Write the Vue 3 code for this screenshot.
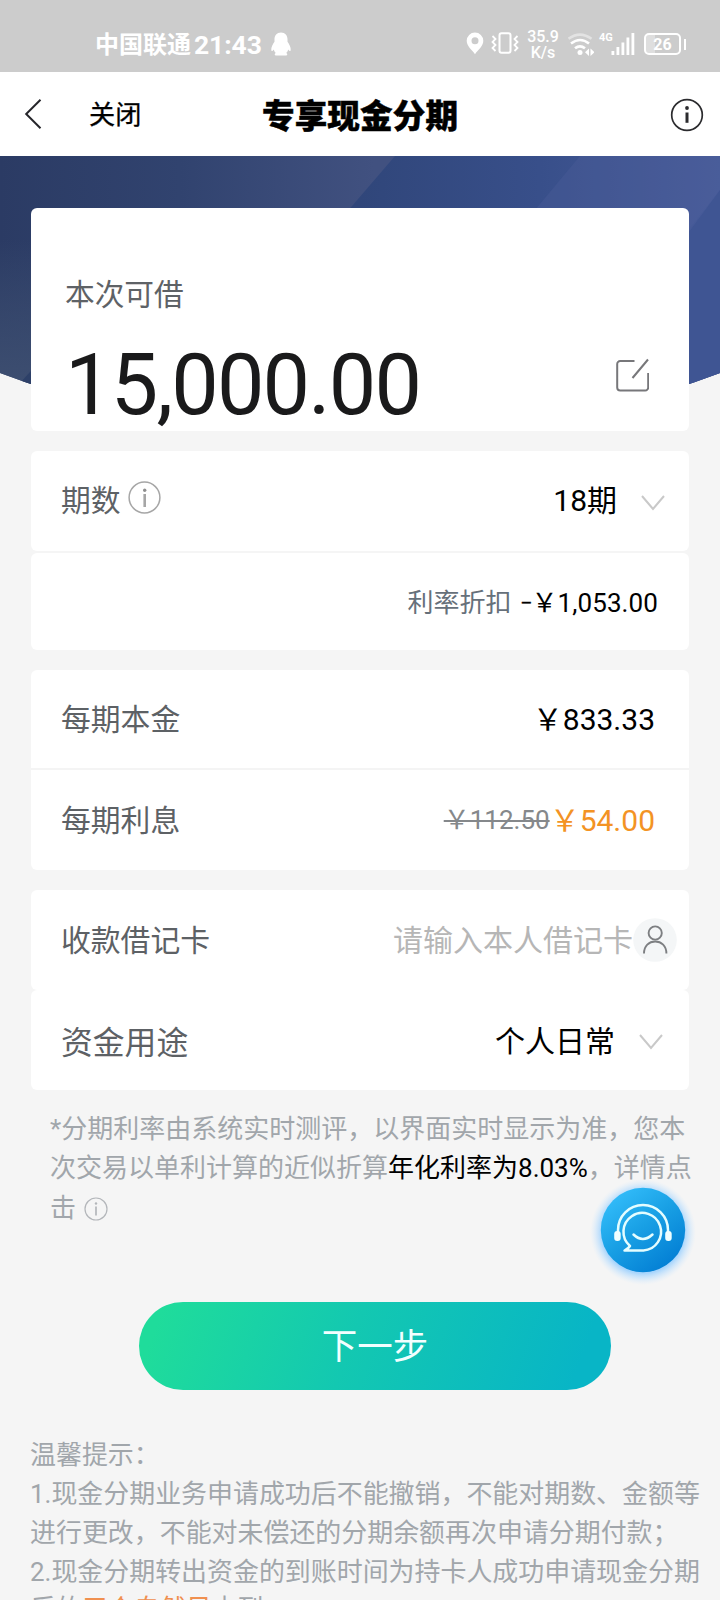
<script setup>
const tips = [
  '1.现金分期业务申请成功后不能撤销，不能对期数、金额等',
  '进行更改，不能对未偿还的分期余额再次申请分期付款；',
  '2.现金分期转出资金的到账时间为持卡人成功申请现金分期',
]
</script>

<template>
  <div class="page">
    <header class="status">
      <div class="carrier">
        <span class="carrier-name">中国联通</span>
        <span class="time">21:43</span>
        <svg class="qq" width="22" height="24" viewBox="0 0 22 24">
          <path fill="#fff" d="M11 .5c4.200 0 6.500 3 6.500 6.800v2.400c1.500 2.200 3.600 5.600 3.200 8.600-.2 1.200-1 1-2.500-.8-.3 1.500-1 2.600-2 3.500 1.200.6 1.700 2.200.1 2.500H5.700c-1.600-.3-1.100-1.900.1-2.500-1-.9-1.700-2-2-3.500-1.500 1.800-2.300 2-2.500.8-.4-3 1.700-6.400 3.200-8.600V7.300C4.500 3.500 6.800.5 11 .5z" />
        </svg>
      </div>
      <div class="signals">
        <svg width="56" height="32" viewBox="465 28 56 32" fill="none" stroke="#fff">
          <path fill="#fff" stroke="none" fill-rule="evenodd" d="M475 32.500a8.300 8.300 0 0 0-8.300 8.300c0 5.400 5.300 9.200 8.300 13.400 3-4.200 8.300-8 8.300-13.400a8.300 8.300 0 0 0-8.300-8.300zm0 4.700a3.500 3.500 0 1 1 0 7 3.500 3.500 0 0 1 0-7z" />
          <rect x="499.500" y="33.200" width="11" height="19.600" rx="2" stroke-width="2" />
          <path stroke-width="1.800" d="M492.500 36l3 3-3 3 3 3-3 3 3 3M517.500 36l-3 3 3 3-3 3 3 3-3 3" />
        </svg>
        <div class="speed"><span>35.9</span><span>K/s</span></div>
        <svg class="wifi" width="26" height="26" viewBox="568 30 26 26" fill="none" stroke="#fff" stroke-width="2.600">
          <path opacity=".45" d="M568.500 37.800q11.500-8.500 23 0" />
          <path d="M571 42.500q9.200-7 18 0" />
          <path d="M575 47.300q5-4 10 0" />
          <circle cx="580" cy="51.500" r="2.500" fill="#fff" stroke="none" />
          <path fill="#fff" stroke="none" d="M589 47.500v7.500l-4-3.800zM590.500 47.500v7.500l4-3.800z" />
        </svg>
        <span class="net">4G</span>
        <svg class="bars" width="24" height="24" viewBox="0 0 24 24" fill="#fff">
          <path d="M.5 19h2.800v4H.5zM5.500 15h2.800v8H5.500zM10.500 10.500h2.800V23h-2.800zM15.500 5.500h2.800V23h-2.800zM20.500 1h2.800v22h-2.800z" />
        </svg>
        <div class="battery"><span>26</span></div>
        <i class="battery-tip"></i>
      </div>
    </header>

    <nav class="nav">
      <svg class="back" width="18" height="32" viewBox="0 0 18 32" fill="none" stroke="#26262b" stroke-width="2"><path d="M16.500 1.800L2.200 16l14.300 14.200" /></svg>
      <span class="close">关闭</span>
      <h1>专享现金分期</h1>
      <svg class="nav-info" width="34" height="34" viewBox="0 0 34 34" fill="none" stroke="#2b2b2e">
        <circle cx="17" cy="17" r="15.300" stroke-width="1.700" />
        <path d="M17 14.500v10.300" stroke-width="3" />
        <circle cx="17" cy="10" r="1.900" fill="#2b2b2e" stroke="none" />
      </svg>
    </nav>

    <svg class="banner" width="720" height="250" viewBox="0 156 720 250">
      <defs>
        <linearGradient id="base" x1="0" y1="0" x2="1" y2="0">
          <stop offset="0" stop-color="#2b3b64" />
          <stop offset=".25" stop-color="#31436f" />
          <stop offset=".52" stop-color="#415180" />
        </linearGradient>
        <linearGradient id="beam" gradientUnits="userSpaceOnUse" x1="360" y1="0" x2="720" y2="0">
          <stop offset="0" stop-color="#30467a" />
          <stop offset=".5" stop-color="#384f8a" />
          <stop offset="1" stop-color="#485c9a" />
        </linearGradient>
        <linearGradient id="leftShade" x1="0" y1="0" x2="0" y2="1">
          <stop offset="0" stop-color="#425474" stop-opacity="0" />
          <stop offset="1" stop-color="#3d4e70" />
        </linearGradient>
        <clipPath id="bowl"><path d="M0 156H720V373Q360 508 0 373z" /></clipPath>
      </defs>
      <g clip-path="url(#bowl)">
        <path fill="url(#base)" d="M0 156h720v250H0z" />
        <path fill="url(#leftShade)" d="M0 240h60v150H0z" />
        <path fill="url(#beam)" d="M395 156h325v250H180z" />
        <path fill="#4c5e9b" opacity=".35" d="M580 156h140v34l-30 38-170 0z" />
        <path fill="#3f5593" d="M720 190v216H560z" />
        <path fill="#2d4068" d="M20 383l20-22v40z" />
      </g>
    </svg>

    <main class="content">
      <section class="card amount-card">
        <p class="amount-label">本次可借</p>
        <div class="amount-row">
          <span class="amount">15,000.00</span>
          <svg width="34" height="34" viewBox="0 0 34 34" fill="none" stroke="#77777a" stroke-width="2">
            <path d="M19.500 3H5.200A3 3 0 0 0 2.200 6v23.500a3 3 0 0 0 3 3h25a3 3 0 0 0 3-3V15M17.500 20L33 1.500" />
          </svg>
        </div>
      </section>

      <section class="group">
        <div class="card row term">
          <span class="label">期数</span>
          <svg class="term-info" width="33" height="33" viewBox="0 0 33 33" fill="none" stroke="#a6a6a6">
            <circle cx="16.500" cy="16.500" r="15.400" stroke-width="1.500" />
            <path d="M16.700 13v13" stroke-width="2.600" /><circle cx="16.700" cy="9.200" r="1.700" fill="#8f8f8f" stroke="none" />
          </svg>
          <span class="value">18期</span>
          <svg class="chevron" width="24" height="16" viewBox="0 0 24 16" fill="none" stroke="#c9c9c9" stroke-width="2"><path d="M1 1l11 13L23 1" /></svg>
        </div>
        <div class="card row discount">
          <span class="discount-label">利率折扣</span>
          <span class="dash">–</span>
          <span class="discount-value">￥1,053.00</span>
        </div>
      </section>

      <section class="card group">
        <div class="row pay lined">
          <span class="label">每期本金</span>
          <span class="value">￥833.33</span>
        </div>
        <div class="row pay">
          <span class="label">每期利息</span>
          <s class="old">￥112.50</s>
          <span class="value now">￥54.00</span>
        </div>
      </section>

      <section class="group">
        <div class="card row debit">
          <span class="label">收款借记卡</span>
          <span class="value placeholder">请输入本人借记卡</span>
          <svg width="44" height="44" viewBox="0 0 44 44" fill="none" stroke="#7d7f82" stroke-width="1.900">
            <circle cx="22" cy="22" r="21.800" fill="#f4f6f7" stroke="none" />
            <circle cx="22.200" cy="15" r="6.600" />
            <path d="M11 35.500C11 28 16 23.500 22.200 23.500S33.400 28 33.400 35.500" />
          </svg>
        </div>
        <div class="card row purpose">
          <span class="label wide">资金用途</span>
          <span class="value">个人日常</span>
          <svg class="chevron" width="24" height="16" viewBox="0 0 24 16" fill="none" stroke="#c9c9c9" stroke-width="2"><path d="M1 1l11 13L23 1" /></svg>
        </div>
      </section>

      <div class="note">
        <p>*分期利率由系统实时测评，以界面实时显示为准，您本</p>
        <p>次交易以单利计算的近似折算<b>年化利率为8.03%</b>，详情点</p>
        <p class="last">击
          <svg width="24" height="24" viewBox="0 0 24 24" fill="none" stroke="#b3b6ba">
            <circle cx="12" cy="12" r="11" stroke-width="1.200" />
            <path d="M12 9.500v9" stroke-width="1.700" /><circle cx="12" cy="6.500" r="1.200" fill="#b3b6ba" stroke="none" />
          </svg>
        </p>
      </div>

      <button class="next">下一步</button>

      <div class="tips">
        <p>温馨提示：</p>
        <p v-for="line in tips" :key="line">{{ line }}</p>
        <p class="arrival">后的<em>五个自然日</em>内到</p>
      </div>
    </main>

    <svg class="service" width="120" height="120" viewBox="0 0 120 120" fill="none">
      <defs>
        <linearGradient id="blue" x1=".1" y1=".1" x2=".75" y2=".95">
          <stop offset="0" stop-color="#33bdfa" />
          <stop offset=".5" stop-color="#189fe4" />
          <stop offset="1" stop-color="#0480d5" />
        </linearGradient>
        <radialGradient id="glow">
          <stop offset=".78" stop-color="#8fcbff" stop-opacity=".75" />
          <stop offset=".88" stop-color="#b0daff" stop-opacity=".45" />
          <stop offset="1" stop-color="#d0e8ff" stop-opacity="0" />
        </radialGradient>
      </defs>
      <circle cx="60" cy="62" r="53" fill="url(#glow)" />
      <circle cx="60" cy="60" r="42.200" fill="url(#blue)" />
      <g stroke="#e4fdff" stroke-width="2.500" stroke-linecap="round">
        <path d="M35 64v-4a24.800 24.800 0 0 1 50 0v4" />
        <path stroke-linejoin="round" d="M41.500 80.500q4-2 5.500-4.500A18.800 18.800 0 1 1 60.500 80.500z" />
        <path d="M50.500 64.500q9.300 9 19 0" />
      </g>
      <rect x="31.200" y="61" width="6.500" height="10" rx="3" fill="#f0ffff" />
      <rect x="82.200" y="61" width="6.500" height="10" rx="3" fill="#f0ffff" />
    </svg>
  </div>
</template>

<style>
body { background: #f5f5f5; }
</style>

<style scoped>
.page {
  position: relative;
  width: 720px;
  height: 1600px;
  overflow: hidden;
  background: #f5f5f5;
  font-family: Roboto, "Noto Sans CJK SC", sans-serif;
}
p, h1 { margin: 0; }
svg { flex: none; display: block; }
span, p { white-space: nowrap; }

.status {
  height: 72px;
  box-sizing: border-box;
  padding: 28px 34px 12px 95px;
  background: #ccc;
  color: #fff;
  display: flex;
  justify-content: space-between;
  align-items: center;
}
.carrier, .signals { display: flex; align-items: center; height: 32px; }
.carrier-name { font-size: 24px; font-weight: 700; line-height: 32px; padding-top: 2px; }
.time { font-size: 26.500px; font-weight: 700; margin-left: 3px; padding-top: 1px; line-height: 32px; letter-spacing: -.1px; }
.qq { margin-left: 8px; }
.speed {
  display: flex;
  flex-direction: column;
  align-items: center;
  width: 34px;
  margin-left: 5px;
  padding-top: 1px;
  font-size: 16px;
  line-height: 15.500px;
  font-weight: 500;
}
.wifi { margin-left: 8px; }
.net { font-size: 11px; font-weight: 700; line-height: 12px; margin: -12px 0 0 5px; width: 13px; }
.bars { margin-left: -1px; }
.battery {
  width: 37px;
  height: 22px;
  box-sizing: border-box;
  border: 2px solid #fff;
  border-radius: 5px;
  margin-left: 9px;
  display: flex;
  align-items: center;
  justify-content: center;
  background: linear-gradient(90deg, #dedede 26%, transparent 26%);
  font-size: 16px;
  font-weight: 700;
}
.battery-tip { width: 2px; height: 11px; background: #fff; margin-left: 3px; }

.nav {
  height: 84px;
  background: #fff;
  display: flex;
  align-items: center;
  color: #000;
}
.back { margin: -1px 0 0 24px; }
.close { margin: -2px 0 0 47px; font-size: 26.200px; width: 52px; -webkit-text-stroke: .3px #000; }
h1 { margin: 6px 0 0 121px; font-size: 32.600px; line-height: 48px; font-weight: 900; letter-spacing: .1px; -webkit-text-stroke: .5px #000; }
.nav-info { margin: 2px 16px 0 auto; }

.banner { position: absolute; left: 0; top: 156px; }

.content { position: relative; padding: 52px 31px 0; }
.card { background: #fff; border-radius: 6px; }
.amount-card { height: 223px; box-sizing: border-box; padding: 64px 40px 0 34px; }
.amount-label { font-size: 29.700px; line-height: 46px; color: #5e6266; }
.amount-row { display: flex; align-items: center; justify-content: space-between; height: 100px; margin-top: 18px; }
.amount-row svg { margin-top: -22px; }
.amount { font-size: 84.500px; line-height: 100px; letter-spacing: -1.800px; color: #1a1a1b; }

.group { margin-top: 20px; }
.row { display: flex; align-items: center; padding: 0 34px 0 30px; box-sizing: border-box; height: 100px; }
.label { font-size: 29.800px; color: #5d6165; margin-right: auto; padding-bottom: 5px; }
.wide { font-size: 31.800px; padding-bottom: 0; }
.value { font-size: 30px; color: #000; padding-bottom: 5px; }
.chevron { margin: 3px -10px 0 24px; }
.term .label { margin-right: 7px; padding-bottom: 6px; }
.term .value { padding-bottom: 6px; }
.term-info { margin: -7px auto 0 0; }
.term { height: 100px; padding-right: 34px; }
.discount { margin-top: 2px; height: 97px; padding: 0 31px 3px; justify-content: flex-end; font-size: 26px; }
.discount-label { color: #66707a; }
.dash { width: 11px; margin: 5px 0 0 9px; font-size: 18px; -webkit-text-stroke: .4px #000; }
.discount-value { letter-spacing: .1px; }
.lined { border-bottom: 2px solid #f4f4f4; }
.old { font-size: 26px; color: #85888b; text-decoration-thickness: 2px; padding-bottom: 5px; }
.now { color: #f39324; }
.debit { padding-right: 12px; }
.placeholder { color: #b6b6b6; }
.purpose { padding-right: 36px; }
.purpose .value { padding-bottom: 2px; }

.note { padding: 20px 0 0 19px; font-size: 26px; line-height: 39px; color: #a1a6ab; }
.note b { font-weight: 400; color: #000; }
.last { display: flex; align-items: center; gap: 8px; margin-top: 1px; }

.next {
  display: block;
  width: 472px;
  height: 88px;
  margin: 74px 0 0 108px;
  padding: 2px 0 0;
  border: 0;
  border-radius: 44px;
  background: linear-gradient(110deg, #1fdc9b 5%, #13c8b1 45%, #08b5c6 92%);
  color: #f2ffff;
  font: 35.500px/86px Roboto, "Noto Sans CJK SC", sans-serif;
}

.tips { margin: 46px -31px 0 -1px; font-size: 25.950px; line-height: 39px; color: #a1a6ab; }
.tips em { font-style: normal; color: #f09050; }
.arrival { margin-top: -2px; }

.service { position: absolute; left: 583px; top: 1170px; }
</style>
